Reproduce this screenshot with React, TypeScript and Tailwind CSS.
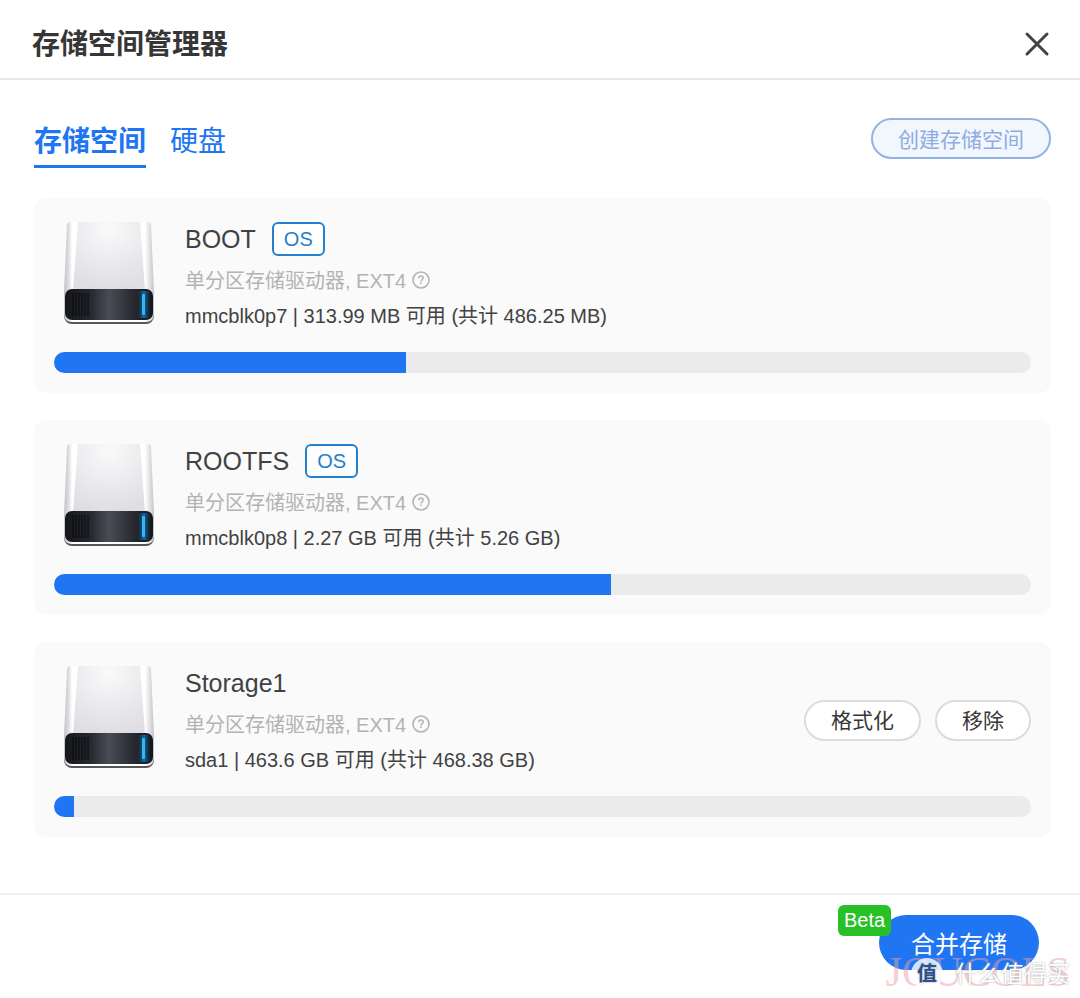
import { useState } from "react";

type Volume = {
  name: string;
  isSystem: boolean;
  type: string;
  detail: string;
  used: number;
};

const volumes: Volume[] = [
  {
    name: "BOOT",
    isSystem: true,
    type: "单分区存储驱动器, EXT4",
    detail: "mmcblk0p7 | 313.99 MB 可用 (共计 486.25 MB)",
    used: 36,
  },
  {
    name: "ROOTFS",
    isSystem: true,
    type: "单分区存储驱动器, EXT4",
    detail: "mmcblk0p8 | 2.27 GB 可用 (共计 5.26 GB)",
    used: 57,
  },
  {
    name: "Storage1",
    isSystem: false,
    type: "单分区存储驱动器, EXT4",
    detail: "sda1 | 463.6 GB 可用 (共计 468.38 GB)",
    used: 2,
  },
];

const tabs = ["存储空间", "硬盘"];

function DriveIcon() {
  return (
    <svg viewBox="0 2 92 106" className="h-[106px] w-[92px] shrink-0" aria-hidden="true">
      <defs>
        <linearGradient id="drive-side" x1="0" x2="1" y1="0" y2="0">
          <stop offset="0" stopColor="#c4c4c8" />
          <stop offset="0.05" stopColor="#dcdcde" />
          <stop offset="0.09" stopColor="#ffffff" />
          <stop offset="0.9" stopColor="#ffffff" />
          <stop offset="0.95" stopColor="#e2e2e4" />
          <stop offset="1" stopColor="#c4c4c8" />
        </linearGradient>
        <radialGradient id="drive-top" cx="0.5" cy="0.1" r="0.9">
          <stop offset="0" stopColor="#fafafb" />
          <stop offset="1" stopColor="#dedee3" />
        </radialGradient>
        <linearGradient id="drive-front" x1="0" x2="1" y1="0" y2="0">
          <stop offset="0" stopColor="#16171b" />
          <stop offset="0.28" stopColor="#26272d" />
          <stop offset="0.5" stopColor="#4a4b55" />
          <stop offset="0.8" stopColor="#26272d" />
          <stop offset="1" stopColor="#15161a" />
        </linearGradient>
        <linearGradient id="drive-led" x1="0" x2="1" y1="0" y2="0">
          <stop offset="0" stopColor="#0b3a5c" stopOpacity="0" />
          <stop offset="0.5" stopColor="#0c6fae" />
          <stop offset="1" stopColor="#0b3a5c" stopOpacity="0" />
        </linearGradient>
      </defs>
      <rect x="1" y="68" width="90" height="36" rx="8" fill="#55565a" />
      <path
        d="M4 5Q4 2 7 2H85Q88 2 88 5L91 72V94Q91 102 83 102H9Q1 102 1 94V72Z"
        fill="url(#drive-side)"
      />
      <path d="M15 2H77L82 70H10Z" fill="url(#drive-top)" />
      <rect x="2" y="69" width="88" height="31" rx="7" fill="url(#drive-front)" />
      {[10, 13, 16, 19, 22, 25].map((x) => (
        <path key={x} d={`M${x} 73V96`} stroke="#08090b" strokeWidth="1" />
      ))}
      <rect x="74" y="71" width="14" height="27" fill="url(#drive-led)" />
      <rect x="79" y="74" width="3" height="21" rx="1" fill="#35b6f2" />
    </svg>
  );
}

function HelpIcon() {
  return (
    <svg viewBox="0 0 18 18" className="size-[18px]" fill="none" stroke="currentColor" aria-hidden="true">
      <circle cx="9" cy="9" r="8" strokeWidth="1.6" />
      <path
        d="M6.8 7.3C6.8 5.9 7.8 5.1 9 5.1S11.2 5.9 11.2 7.1C11.2 8.6 9 8.7 9 10.4"
        strokeWidth="1.5"
      />
      <path d="M9 11.6V13.1" strokeWidth="1.6" />
    </svg>
  );
}

function VolumeCard({ volume }: { volume: Volume }) {
  return (
    <li className="rounded-xl bg-[#fafafb] px-5 pt-6 pb-5">
      <div className="flex items-start">
        <div className="pl-[9px]">
          <DriveIcon />
        </div>
        <div className="ml-[30px] flex-1">
          <div className="flex h-[34px] items-center gap-4">
            <h2 className="text-[25px] leading-8 text-[#424242]">{volume.name}</h2>
            {volume.isSystem && (
              <span className="rounded-md border-2 border-[#2480cc] bg-white px-2.5 text-xl leading-[30px] text-[#2480cc]">
                OS
              </span>
            )}
          </div>
          <p className="mt-2 flex items-center gap-1.5 text-xl leading-[35px] text-[#b3b3b3]">
            {volume.type}
            <button type="button" aria-label="帮助" className="pb-1">
              <HelpIcon />
            </button>
          </p>
          <p className="text-xl leading-[35px] text-[#424242]">{volume.detail}</p>
        </div>
        {!volume.isSystem && (
          <div className="mb-1 flex gap-3.5 self-center">
            <button className="h-[41px] rounded-full border-2 border-[#dcdcdc] bg-white px-[25px] pt-0.5 text-[21px] text-[#363636]">
              格式化
            </button>
            <button className="h-[41px] rounded-full border-2 border-[#dcdcdc] bg-white px-[25px] pt-0.5 text-[21px] text-[#363636]">
              移除
            </button>
          </div>
        )}
      </div>
      <div
        role="progressbar"
        aria-label={volume.name}
        aria-valuenow={volume.used}
        className="mt-[18px] h-[21px] overflow-hidden rounded-full bg-[#ebebeb]">
        <div className="h-full bg-[#2075f2]" style={{ width: `${volume.used}%` }} />
      </div>
    </li>
  );
}

function Watermark() {
  return (
    <div className="pointer-events-none absolute right-2.5 bottom-1 h-11 w-[192px]">
      <span className="absolute right-0 bottom-0 font-['Liberation_Serif',serif] text-[42px] leading-11 text-[#e9a0a5]/50">
        JOUCOLS
      </span>
      <span className="absolute right-0 bottom-1 flex items-center gap-3 text-[23px] leading-8 whitespace-nowrap text-white [text-shadow:0_0_2px_#999]">
        <span className="flex size-8 items-center justify-center rounded-full bg-white/80 text-xl font-bold text-[#2b4f8f]">
          值
        </span>
        什么值得买
      </span>
    </div>
  );
}

export default function App() {
  const [activeTab, setActiveTab] = useState(tabs[0]);

  return (
    <div className="relative flex min-h-screen flex-col bg-white font-['Liberation_Sans','Noto_Sans_CJK_SC',sans-serif] text-[#363636]">
      <header className="flex h-20 items-center justify-between border-b-2 border-[#e8e8e8] pr-[30px] pl-8">
        <h1 className="pt-3 text-[28px] leading-10 font-bold">存储空间管理器</h1>
        <button type="button" aria-label="关闭" className="pt-2.5">
          <svg viewBox="0 0 26 26" className="size-[26px]" stroke="#424242" strokeWidth="3" strokeLinecap="round">
            <path d="M3 3L23 23M23 3L3 23" />
          </svg>
        </button>
      </header>

      <main className="flex-1 pt-[38px] pr-[29px] pb-14 pl-[34px]">
        <div className="flex items-start justify-between">
          <nav className="flex gap-6" role="tablist">
            {tabs.map((tab) => (
              <button
                key={tab}
                role="tab"
                aria-selected={tab === activeTab}
                onClick={() => setActiveTab(tab)}
                className={`h-[50px] border-b-3 text-[28px] leading-[46px] text-[#2075f2] ${
                  tab === activeTab ? "border-[#2075f2] font-bold" : "border-transparent"
                }`}>
                {tab}
              </button>
            ))}
          </nav>
          <button
            disabled
            className="h-[41px] rounded-full border-2 border-[#90b4e6] bg-[#f2f7fe] px-[25px] pt-0.5 text-[21px] text-[#8eace0]">
            创建存储空间
          </button>
        </div>

        <ul className="mt-[30px] flex flex-col gap-[27px]">
          {volumes.map((volume) => (
            <VolumeCard key={volume.name} volume={volume} />
          ))}
        </ul>
      </main>

      <footer className="flex justify-end border-t-2 border-[#f2f2f2] pt-5 pr-[41px] pb-7">
        <div className="relative">
          <button className="h-[55px] rounded-full bg-[#2075f2] px-8 pt-1 text-2xl text-white">
            合并存储
          </button>
          <span className="absolute -top-2.5 -left-[41px] rounded-md bg-[#27c026] px-1.5 text-xl leading-[31px] text-white">
            Beta
          </span>
        </div>
      </footer>
      <Watermark />
    </div>
  );
}
